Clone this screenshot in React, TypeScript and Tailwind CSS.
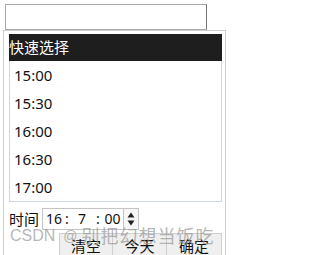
import React from "react";

export default function App() {
  const times = ["15:00", "15:30", "16:00", "16:30", "17:00"];
  return (
    <div className="relative w-[228px] h-[255px] overflow-hidden bg-white font-['Noto_Sans','Noto_Sans_CJK_SC',sans-serif] text-[#111]">
      <div className="pt-[4px] pl-[5px]">
        <div className="w-[202px] h-[26px] border border-[#a8a8a8] border-r-[#777] bg-white" />
      </div>
      <div className="ml-[3px] w-[223px] border border-[#cfcfcf] pl-[5px] pr-[3px] pt-[3px] bg-white">
        <div className="h-[27px] bg-[#1e1e1e] text-white text-[15px] leading-[27px] whitespace-nowrap">
          快速选择
        </div>
        <div className="border-x border-b border-[#c9d6e3]">
          {times.map((t) => (
            <div key={t} className="h-[28px] pl-[4px] text-[15px] leading-[28px]">
              {t}
            </div>
          ))}
        </div>
        <div className="mt-[6px] flex items-center">
          <span className="text-[15px] leading-[22px] w-[33px] whitespace-nowrap">时间</span>
          <div className="flex h-[22px] w-[82px] items-center border border-[#c4c4c4] text-[14px] leading-[20px] whitespace-nowrap">
            <span className="ml-[3px] w-[16px] text-center">16</span>
            <span className="w-[10px] text-center">:</span>
            <span className="w-[20px] text-center">7</span>
            <span className="w-[12px] text-center">:</span>
            <span className="w-[17px] text-center">00</span>
          </div>
          <div className="flex h-[22px] w-[15px] flex-col items-center justify-center border border-l-0 border-[#c4c4c4] bg-[#f7f7f7]">
            <svg width="8" height="6" viewBox="0 0 8 6" className="mb-[2px]">
              <path d="M4 0.5 L7.5 5.5 L0.5 5.5 Z" fill="#222" />
            </svg>
            <svg width="8" height="6" viewBox="0 0 8 6">
              <path d="M0.5 0.5 L7.5 0.5 L4 5.5 Z" fill="#222" />
            </svg>
          </div>
        </div>
        <div className="mt-[3px] ml-[50px] flex">
          <button className="w-[54px] h-[26px] border border-[#cfcfcf] bg-[#efefef] text-[15px] leading-[24px] text-[#111]">清空</button>
          <button className="w-[54px] h-[26px] border border-l-0 border-[#cfcfcf] bg-[#efefef] text-[15px] leading-[24px] text-[#111]">今天</button>
          <button className="w-[55px] h-[26px] border border-l-0 border-[#cfcfcf] bg-[#efefef] text-[15px] leading-[24px] text-[#111]">确定</button>
        </div>
      </div>
      <div className="pointer-events-none absolute left-[10px] top-[226px] flex items-center whitespace-nowrap text-[rgba(150,150,150,0.7)]">
        <span className="font-['Liberation_Sans',sans-serif] text-[16px] leading-[20px]">CSDN</span>
        <span className="ml-[8px] font-['Liberation_Sans',sans-serif] text-[14px] leading-[20px]">@</span>
        <span className="ml-[4px] text-[18px] leading-[20px] tracking-[1px]">别把幻想当饭吃</span>
      </div>
    </div>
  );
}
